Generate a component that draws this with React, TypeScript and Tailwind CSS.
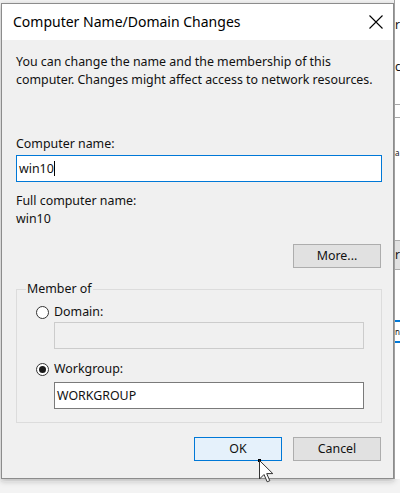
import React from "react";

function Radio({ checked }: { checked?: boolean }) {
  return (
    <span className="w-[13px] h-[13px] rounded-full border border-[#333333] bg-white flex items-center justify-center shrink-0">
      {checked && <span className="w-[7px] h-[7px] rounded-full bg-[#1a1a1a]" />}
    </span>
  );
}

export default function App() {
  return (
    <div className="w-[400px] h-[493px] bg-[#f3f3f3] flex overflow-hidden relative font-['Noto_Sans',sans-serif] text-[12.4px] text-[#111111]">
      <div className="pt-[3px] pl-[1px] flex flex-col">
        <div className="w-[393px] h-[476px] flex flex-col border border-[#8c8c8c] shadow-[0_2px_6px_rgba(0,0,0,0.25)]">
          {/* Title bar */}
          <div className="h-[36px] bg-white flex items-center justify-between pl-[11px] pr-[10px]">
            <span className="text-[14px] leading-[20px] text-black">Computer Name/Domain Changes</span>
            <svg width="14" height="14" viewBox="0 0 14 14" className="text-black">
              <path d="M0.5 0.5 L13.5 13.5 M13.5 0.5 L0.5 13.5" stroke="currentColor" strokeWidth="1.1" fill="none" />
            </svg>
          </div>
          {/* Body */}
          <div className="flex-1 flex flex-col bg-[#f0f0f0] pl-[14px] pr-[11px] pt-[13px] leading-[18px]">
            <div>
              <div>You can change the name and the membership of this</div>
              <div>computer. Changes might affect access to network resources.</div>
            </div>
            <div className="mt-[46px]">Computer name:</div>
            <div className="mt-[2px] h-[27px] border border-[#0078d7] bg-white flex items-center pl-[2px]">
              <span>win10</span>
              <span className="w-px h-[15px] bg-black" />
            </div>
            <div className="mt-[10px]">Full computer name:</div>
            <div>win10</div>
            <div className="mt-[16px] flex justify-end pr-[1px]">
              <div className="w-[88px] h-[24px] bg-[#e1e1e1] border border-[#adadad] flex items-center justify-center">
                More...
              </div>
            </div>
            <fieldset className="mt-[12px] border border-[#dcdcdc] p-0 m-0">
              <legend className="ml-[9px] px-[1px] leading-[18px]">Member of</legend>
              <div className="pl-[19px] pr-[17px] pt-[5px] pb-[13px] flex flex-col">
                <div className="h-[18px] flex items-center gap-[5px]">
                  <Radio />
                  <span>Domain:</span>
                </div>
                <div className="ml-[18px] mt-[1px] h-[27px] border border-[#cccccc] bg-[#f0f0f0]" />
                <div className="mt-[11px] h-[18px] flex items-center gap-[5px]">
                  <Radio checked />
                  <span>Workgroup:</span>
                </div>
                <div className="ml-[18px] mt-[4px] h-[27px] border border-[#7a7a7a] bg-white flex items-center pl-[2px]">
                  WORKGROUP
                </div>
              </div>
            </fieldset>
            <div className="mt-[14px] flex justify-end gap-[11px] pr-[1px]">
              <div className="w-[88px] h-[24px] bg-[#e5f1fb] border border-[#0078d7] flex items-center justify-center">
                OK
              </div>
              <div className="w-[88px] h-[24px] bg-[#e1e1e1] border border-[#adadad] flex items-center justify-center">
                Cancel
              </div>
            </div>
          </div>
        </div>
        <div className="mt-[2px] h-px bg-[#e0e0e0]" />
      </div>
      {/* Background window strip on the right */}
      <div className="flex-1 flex flex-col overflow-hidden">
        <div className="h-[479px] flex flex-col bg-white border-l border-[#a0a0a0] overflow-hidden text-[12px] leading-[14px] whitespace-nowrap">
          <div className="h-[18px]" />
          <div>r</div>
          <div className="h-[28px]" />
          <div>c</div>
          <div className="h-[30px]" />
          <div className="h-px bg-[#a8a8a8]" />
          <div className="h-[12px]" />
          <div className="h-px bg-[#a8a8a8]" />
          <div className="h-[28px]" />
          <div className="text-[8px]">a</div>
          <div className="h-[80px]" />
          <div className="h-[30px] bg-[#e1e1e1] border-y border-[#adadad] flex items-center">r</div>
          <div className="h-[50px]" />
          <div className="h-[23px] border-y-2 border-[#0078d7] flex items-center text-[8px]">n</div>
        </div>
      </div>
      {/* Mouse cursor */}
      <svg className="absolute left-[258px] top-[459px]" width="18" height="26" viewBox="0 0 18 26">
        <rect x="0" y="0" width="3" height="3" fill="#000" />
        <path d="M1.5 1.5 V20 L6 15.5 L9.2 22.8 L11.8 21.7 L8.7 14.6 H14.8 Z" fill="#fff" stroke="#333" strokeWidth="1" strokeLinejoin="round" />
      </svg>
    </div>
  );
}
